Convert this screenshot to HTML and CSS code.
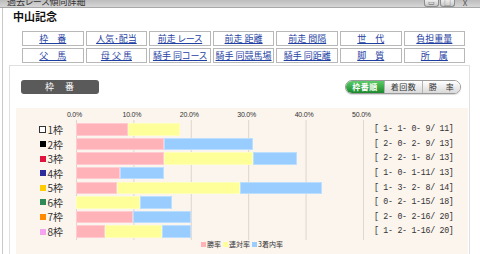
FILE: index.html
```html
<!DOCTYPE html>
<html lang="ja">
<head>
    <meta charset="utf-8">
    <link rel="stylesheet" href="styles.css">
</head>
<body>
<div class="titlebar">
    <span class="ttl">過去レース傾向詳細</span>
    <div class="winbtns">
        <span class="winbtn">▭</span>
        <span class="winbtn">□</span>
        <span class="winclose">X</span>
    </div>
</div>

<div class="window">
    <h1 class="race">中山記念</h1>

    <div class="tabs">
        <a class="tab" href="#">枠　番</a>
        <a class="tab" href="#">人気･配当</a>
        <a class="tab" href="#">前走 レース</a>
        <a class="tab" href="#">前走 距離</a>
        <a class="tab" href="#">前走 間隔</a>
        <a class="tab" href="#">世　代</a>
        <a class="tab" href="#">負担重量</a>
        <a class="tab" href="#">父　馬</a>
        <a class="tab" href="#">母 父 馬</a>
        <a class="tab" href="#">騎手 同コース</a>
        <a class="tab" href="#">騎手 同競馬場</a>
        <a class="tab" href="#">騎手 同距離</a>
        <a class="tab" href="#">脚　質</a>
        <a class="tab" href="#">所　属</a>
    </div>

    <div class="panel">
        <div class="phead">
            <div class="plabel">枠　番</div>
            <div class="toggle">
                <span class="seg on">枠番順</span>
                <span class="seg">着回数</span>
                <span class="seg">勝　率</span>
            </div>
        </div>

        <div class="chart">
            <div class="axis">
                <span>0.0%</span>
                <span>10.0%</span>
                <span>20.0%</span>
                <span>30.0%</span>
                <span>40.0%</span>
                <span>50.0%</span>
            </div>

            <div class="plot">
                <div class="names">
                    <div class="nm"><i class="sq c1"></i>1枠</div>
                    <div class="nm"><i class="sq c2"></i>2枠</div>
                    <div class="nm"><i class="sq c3"></i>3枠</div>
                    <div class="nm"><i class="sq c4"></i>4枠</div>
                    <div class="nm"><i class="sq c5"></i>5枠</div>
                    <div class="nm"><i class="sq c6"></i>6枠</div>
                    <div class="nm"><i class="sq c7"></i>7枠</div>
                    <div class="nm"><i class="sq c8"></i>8枠</div>
                </div>

                <!-- 1% = 5.74px -->
                <div class="grid">
                    <div class="bar"><span class="w" style="width:52.2px"></span><span class="r" style="width:52.2px"></span></div>
                    <div class="bar"><span class="w" style="width:88.3px"></span><span class="f" style="width:88.3px"></span></div>
                    <div class="bar"><span class="w" style="width:88.3px"></span><span class="r" style="width:88.3px"></span><span class="f" style="width:44.2px"></span></div>
                    <div class="bar"><span class="w" style="width:44.2px"></span><span class="f" style="width:44.2px"></span></div>
                    <div class="bar"><span class="w" style="width:41px"></span><span class="r" style="width:123px"></span><span class="f" style="width:82px"></span></div>
                    <div class="bar"><span class="r" style="width:63.8px"></span><span class="f" style="width:31.9px"></span></div>
                    <div class="bar"><span class="w" style="width:57.4px"></span><span class="f" style="width:57.4px"></span></div>
                    <div class="bar"><span class="w" style="width:28.7px"></span><span class="r" style="width:57.4px"></span><span class="f" style="width:28.7px"></span></div>
                </div>

                <div class="recs">
                    <div class="rec">[ 1- 1- 0- 9/ 11]</div>
                    <div class="rec">[ 2- 0- 2- 9/ 13]</div>
                    <div class="rec">[ 2- 2- 1- 8/ 13]</div>
                    <div class="rec">[ 1- 0- 1-11/ 13]</div>
                    <div class="rec">[ 1- 3- 2- 8/ 14]</div>
                    <div class="rec">[ 0- 2- 1-15/ 18]</div>
                    <div class="rec">[ 2- 0- 2-16/ 20]</div>
                    <div class="rec">[ 1- 2- 1-16/ 20]</div>
                </div>
            </div>

            <div class="legend">
                <i class="lg w"></i><span>勝率</span>
                <i class="lg r"></i><span>連対率</span>
                <i class="lg f"></i><span>3着内率</span>
            </div>
        </div>
    </div>
</div>
</body>
</html>
```

FILE: styles.css
```css
body {
    margin: 0;
    width: 480px;
    height: 254px;
    overflow: hidden;
    background-color: #fff;
    font-family: "Noto Sans CJK JP", sans-serif;
    color: #222;
}

/* window title bar (top is cut off) */
.titlebar {
    height: 7px;
    background: linear-gradient(#bdbdbd, #d6d6d6);
    border-bottom: 1px solid #a8a8a8;
    display: flex;
    justify-content: space-between;
    overflow: hidden;
}

.ttl {
    font-size: 9px;
    line-height: 9px;
    margin-top: -3px;
    padding-left: 7px;
    color: #333;
    font-feature-settings: "palt";
}

.winbtns {
    display: flex;
    align-items: flex-start;
    gap: 1px;
    padding-right: 6px;
}

.winbtn {
    width: 13px;
    height: 6px;
    border: 1px solid #8c8c8c;
    border-top: none;
    border-radius: 0 0 3px 3px;
    background: linear-gradient(#ececec, #c9c9c9);
    font-size: 7px;
    line-height: 4px;
    text-align: center;
    color: #555;
}

.winclose {
    width: 18px;
    font-size: 8px;
    line-height: 5px;
    text-align: center;
    color: #555;
}

.window {
    margin-left: 2px;
    border-left: 1px solid #c9c9c9;
    height: 246px;
    overflow: hidden;
}

.race {
    margin: 0;
    padding: 2px 0 0 10px;
    font-size: 11px;
    line-height: 13px;
    font-weight: bold;
    color: #111;
}

/* link tabs */
.tabs {
    margin: 8px 0 0 19px;
    display: grid;
    grid-template-columns: repeat(7, 61.6px);
    column-gap: 2px;
    row-gap: 2px;
}

.tab {
    height: 13px;
    border: 1px solid #b8b8b8;
    text-align: center;
    font-size: 9px;
    line-height: 13px;
    color: #1f3fa3;
    text-decoration: underline;
    font-feature-settings: "palt";
    white-space: nowrap;
}

/* panel */
.panel {
    margin: 2px 0 0 6px;
    width: 459px;
    height: 200px;
    border: 1px solid #e0e0e0;
}

.phead {
    display: flex;
    justify-content: space-between;
    align-items: center;
    padding: 14px 8px 0 11px;
}

.plabel {
    width: 78px;
    height: 14px;
    background-color: #5a5a5a;
    border-radius: 3px;
    color: #fff;
    font-size: 9px;
    line-height: 14px;
    text-align: center;
    letter-spacing: 1px;
}

.toggle {
    display: flex;
    height: 12px;
    border: 1px solid #9a9a9a;
    border-radius: 7px;
    overflow: hidden;
    box-shadow: 0 1px 1px rgba(0, 0, 0, 0.15);
}

.seg {
    width: 37px;
    font-size: 8px;
    line-height: 12px;
    text-align: center;
    background: linear-gradient(#ffffff, #d9d9d9);
    color: #333;
    border-left: 1px solid #b3b3b3;
    letter-spacing: 0.5px;
}

.seg.on {
    width: 38px;
    border-left: none;
    background: linear-gradient(#5ccb69, #1c8a2c);
    color: #fff;
    font-weight: bold;
}

/* chart */
.chart {
    margin: 14px 1px 0 6px;
    height: 160px;
    background-color: #fbf5ee;
}

.axis {
    display: flex;
    height: 9px;
    padding: 3px 0 0 29.8px;
    font-family: "Liberation Sans", sans-serif;
    font-size: 7px;
    line-height: 7px;
    letter-spacing: -0.2px;
    color: #333;
}

.axis span {
    width: 57.4px;
    text-align: center;
}

.plot {
    display: flex;
}

.names {
    width: 60px;
    padding-top: 3.3px;
}

.nm {
    height: 12.4px;
    margin-bottom: 2.2px;
    display: flex;
    align-items: center;
    justify-content: flex-end;
    padding-right: 13px;
    font-size: 10px;
    color: #333;
}

.sq {
    width: 6px;
    height: 6px;
    margin-right: 1px;
}

.c1 { background-color: #fff; border: 1px solid #333; width: 5px; height: 5px; }
.c2 { background-color: #000; }
.c3 { background-color: #e0143c; }
.c4 { background-color: #2b2b9c; }
.c5 { background-color: #ffcc00; }
.c6 { background-color: #2e8b57; }
.c7 { background-color: #ff8a00; }
.c8 { background-color: #f3a6ef; }

.grid {
    width: 288px;
    padding-top: 3.3px;
    background-image: linear-gradient(to right, #dcd6cf 1px, transparent 1px);
    background-size: 57.4px 100%;
}

.bar {
    display: flex;
    height: 12.4px;
    margin-bottom: 2.2px;
}

.bar span {
    box-shadow: inset 0 0 0 1px rgba(255, 255, 255, 0.35);
}

.w { background-color: #ffb3b9; }
.r { background-color: #ffff99; }
.f { background-color: #99ccff; }

.recs {
    padding: 3.3px 0 0 10px;
}

.rec {
    height: 12.4px;
    margin-bottom: 2.2px;
    font-family: "Liberation Mono", monospace;
    font-size: 8.3px;
    line-height: 12.4px;
    letter-spacing: -0.3px;
    white-space: pre;
    color: #333;
}

.legend {
    display: flex;
    align-items: center;
    padding-left: 185px;
    height: 9px;
    font-size: 7px;
    line-height: 9px;
    color: #333;
}

.lg {
    width: 5px;
    height: 5px;
    margin-right: 1px;
}

.legend span {
    margin-right: 2px;
}
```
